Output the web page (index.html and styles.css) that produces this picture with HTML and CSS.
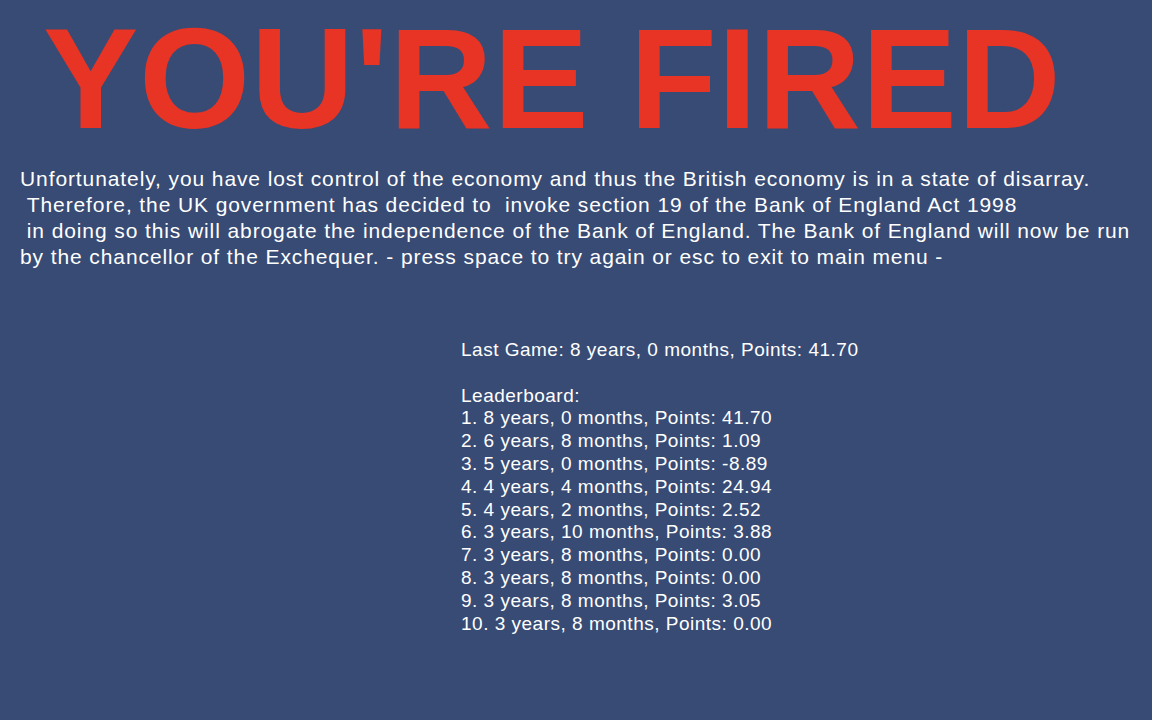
FILE: index.html
```html
<!DOCTYPE html>
<html lang="en">
<head>
    <meta charset="UTF-8">
    <title>You're Fired</title>
    <link rel="stylesheet" href="styles.css">
</head>
<body>
    <div class="screen">
        <h1 class="title">YOU'RE FIRED</h1>
        <p class="message">Unfortunately, you have lost control of the economy and thus the British economy is in a state of disarray.
 Therefore, the UK government has decided to  invoke section 19 of the Bank of England Act 1998
 in doing so this will abrogate the independence of the Bank of England. The Bank of England will now be run by the chancellor of the Exchequer. - press space to try again or esc to exit to main menu -</p>

        <div class="scores">
            <div class="last-game">Last Game: 8 years, 0 months, Points: 41.70</div>
            <div class="board-title">Leaderboard:</div>
            <ol class="board">
                <li>1. 8 years, 0 months, Points: 41.70</li>
                <li>2. 6 years, 8 months, Points: 1.09</li>
                <li>3. 5 years, 0 months, Points: -8.89</li>
                <li>4. 4 years, 4 months, Points: 24.94</li>
                <li>5. 4 years, 2 months, Points: 2.52</li>
                <li>6. 3 years, 10 months, Points: 3.88</li>
                <li>7. 3 years, 8 months, Points: 0.00</li>
                <li>8. 3 years, 8 months, Points: 0.00</li>
                <li>9. 3 years, 8 months, Points: 3.05</li>
                <li>10. 3 years, 8 months, Points: 0.00</li>
            </ol>
        </div>
    </div>
</body>
</html>
```

FILE: styles.css
```css
:root {
    --bg: #384b74;
    --red: #e73424;
    --text: #ffffff;
}

* {
    margin: 0;
    padding: 0;
    box-sizing: border-box;
}

html, body {
    height: 100%;
}

body {
    background-color: var(--bg);
    color: var(--text);
    font-family: 'Liberation Sans', Arial, sans-serif;
    overflow: hidden;
}

.screen {
    display: flex;
    flex-direction: column;
    padding: 0 14px 0 20px;
}

.title {
    font-family: 'Liberation Sans', Arial, sans-serif;
    font-weight: 700;
    font-size: 143px;
    line-height: 160px;
    letter-spacing: 0.6px;
    color: var(--red);
    padding-left: 23px;
    margin-top: -1px;
    white-space: nowrap;
}

.message {
    font-size: 21px;
    line-height: 26px;
    letter-spacing: 0.9px;
    white-space: pre-wrap;
    margin-top: 7px;
}

.scores {
    margin-top: 69px;
    margin-left: 441px;
    font-size: 19px;
    line-height: 22.8px;
    letter-spacing: 0.5px;
}

.board-title {
    margin-top: 22.8px;
}

.board {
    list-style: none;
}
```
